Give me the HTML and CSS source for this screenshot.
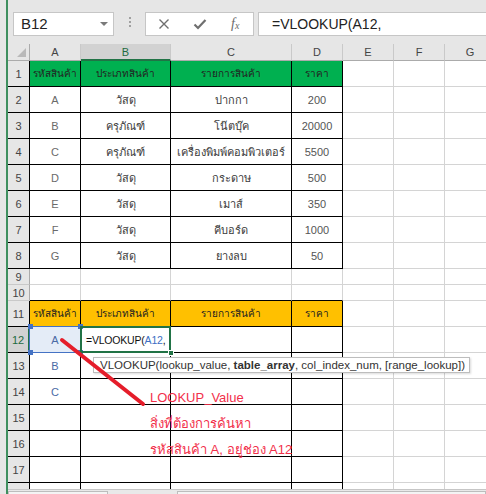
FILE: index.html
```html
<!DOCTYPE html>
<html lang="th">
<head>
    <meta charset="UTF-8">
    <meta name="viewport" content="width=device-width, initial-scale=1.0">
    <title>VLOOKUP</title>
    <link rel="stylesheet" href="styles.css">
</head>
<body>
<div class="app">
    <div class="edge"></div>
    <div class="workbook">
        <!-- name box + formula bar -->
        <div class="formula-bar">
            <div class="name-box">B12<span class="drop"></span></div>
            <div class="grip"><i></i><i></i><i></i></div>
            <div class="fx-buttons">
                <span class="fx-btn">
                    <svg width="12" height="12" viewBox="0 0 12 12"><path d="M1.5 1.5 L10.5 10.5 M10.5 1.5 L1.5 10.5" stroke="#6f6f6f" stroke-width="1.4" fill="none"/></svg>
                </span>
                <span class="fx-btn">
                    <svg width="14" height="12" viewBox="0 0 14 12"><path d="M1.5 6.5 L5 10 L12.5 2" stroke="#6f6f6f" stroke-width="2.2" fill="none"/></svg>
                </span>
                <span class="fx-btn fx">f<small>x</small></span>
            </div>
            <div class="formula-input">=VLOOKUP(A12,</div>
        </div>

        <div class="sheet">
            <div class="row head">
                <div class="corner"></div>
                <div class="ch">A</div><div class="ch sel">B</div><div class="ch">C</div><div class="ch">D</div>
                <div class="ch">E</div><div class="ch">F</div><div class="ch">G</div>
            </div>

            <!-- product table -->
            <div class="row">
                <div class="rh k">1</div>
                <div class="k g">รหัสสินค้า</div><div class="k g">ประเภทสินค้า</div><div class="k g">รายการสินค้า</div><div class="k g">ราคา</div>
                <div></div><div></div><div></div>
            </div>
            <div class="row">
                <div class="rh k">2</div>
                <div class="k lt">A</div><div class="k">วัสดุ</div><div class="k">ปากกา</div><div class="k num">200</div>
                <div></div><div></div><div></div>
            </div>
            <div class="row">
                <div class="rh k">3</div>
                <div class="k lt">B</div><div class="k">ครุภัณฑ์</div><div class="k">โน๊ตบุ๊ค</div><div class="k num">20000</div>
                <div></div><div></div><div></div>
            </div>
            <div class="row">
                <div class="rh k">4</div>
                <div class="k lt">C</div><div class="k">ครุภัณฑ์</div><div class="k">เครื่องพิมพ์คอมพิวเตอร์</div><div class="k num">5500</div>
                <div></div><div></div><div></div>
            </div>
            <div class="row">
                <div class="rh k">5</div>
                <div class="k lt">D</div><div class="k">วัสดุ</div><div class="k">กระดาษ</div><div class="k num">500</div>
                <div></div><div></div><div></div>
            </div>
            <div class="row">
                <div class="rh k">6</div>
                <div class="k lt">E</div><div class="k">วัสดุ</div><div class="k">เมาส์</div><div class="k num">350</div>
                <div></div><div></div><div></div>
            </div>
            <div class="row">
                <div class="rh k">7</div>
                <div class="k lt">F</div><div class="k">วัสดุ</div><div class="k">คีบอร์ด</div><div class="k num">1000</div>
                <div></div><div></div><div></div>
            </div>
            <div class="row">
                <div class="rh k">8</div>
                <div class="k lt">G</div><div class="k">วัสดุ</div><div class="k">ยางลบ</div><div class="k num">50</div>
                <div></div><div></div><div></div>
            </div>
            <div class="row short">
                <div class="rh">9</div>
                <div></div><div></div><div></div><div></div><div></div><div></div><div></div>
            </div>
            <div class="row short">
                <div class="rh">10</div>
                <div class="kb"></div><div class="kb"></div><div class="kb"></div><div class="kb"></div>
                <div></div><div></div><div></div>
            </div>

            <!-- lookup table -->
            <div class="row">
                <div class="rh k">11</div>
                <div class="k y">รหัสสินค้า</div><div class="k y">ประเภทสินค้า</div><div class="k y">รายการสินค้า</div><div class="k y">ราคา</div>
                <div></div><div></div><div></div>
            </div>
            <div class="row">
                <div class="rh k sel">12</div>
                <div class="k ref">A<i class="dot tl"></i><i class="dot tr"></i><i class="dot bl"></i><i class="dot br"></i></div>
                <div class="k active">=VLOOKUP(<span class="arg">A12</span>,<i class="fill-handle"></i></div>
                <div class="k"></div><div class="k"></div>
                <div></div><div></div><div></div>
            </div>
            <div class="row">
                <div class="rh k">13</div>
                <div class="k blue">B</div><div class="k"></div><div class="k"></div><div class="k"></div>
                <div></div><div></div><div></div>
            </div>
            <div class="row">
                <div class="rh k">14</div>
                <div class="k blue">C</div><div class="k"></div><div class="k"></div><div class="k"></div>
                <div></div><div></div><div></div>
            </div>
            <div class="row">
                <div class="rh k">15</div>
                <div class="k"></div><div class="k"></div><div class="k"></div><div class="k"></div>
                <div></div><div></div><div></div>
            </div>
            <div class="row">
                <div class="rh k">16</div>
                <div class="k"></div><div class="k"></div><div class="k"></div><div class="k"></div>
                <div></div><div></div><div></div>
            </div>
            <div class="row">
                <div class="rh k">17</div>
                <div class="k"></div><div class="k"></div><div class="k"></div><div class="k"></div>
                <div></div><div></div><div></div>
            </div>
            <!-- partly scrolled-in row, its number hidden under the tab strip -->
            <div class="row">
                <div class="rh k"></div>
                <div class="k"></div><div class="k"></div><div class="k"></div><div class="k"></div>
                <div></div><div></div><div></div>
            </div>

            <!-- function hint under the active cell -->
            <div class="hint">VLOOKUP(lookup_value, <b>table_array</b>, col_index_num, [range_lookup])</div>

            <svg class="pointer" width="160" height="380" viewBox="0 0 160 380">
                <line x1="54" y1="296" x2="135" y2="360" stroke="#e51d2a" stroke-width="4" stroke-linecap="round"/>
            </svg>
            <div class="note">
                <p>LOOKUP_Value</p>
                <p>สิ่งที่ต้องการค้นหา</p>
                <p>รหัสสินค้า A, อยู่ช่อง A12</p>
            </div>
        </div>

        <div class="sheet-tabs">
            <span class="tab-nav"></span>
            <span class="tab-strip"></span>
        </div>
    </div>
</div>
</body>
</html>
```

FILE: styles.css
```css
* {
    box-sizing: border-box;
    margin: 0;
    padding: 0;
}

html, body {
    width: 486px;
    height: 494px;
    overflow: hidden;
}

body {
    background-color: #e6e6e6;
    font-family: "Liberation Sans", "Noto Sans", sans-serif;
    color: #333;
}

.app {
    display: flex;
    height: 494px;
}

.edge {
    flex: none;
    width: 8px;
    background-color: #e6e6e6;
    border-right: 2px solid #3f8f5f;
}

.workbook {
    flex: 1;
    min-width: 0;
    display: flex;
    flex-direction: column;
}

/* formula bar */
.formula-bar {
    flex: none;
    height: 44px;
    display: flex;
    align-items: flex-start;
    padding: 12px 0 0 5px;
}

.name-box {
    position: relative;
    width: 101px;
    height: 24px;
    padding-left: 7px;
    background-color: white;
    border: 1px solid #c6c6c6;
    font-size: 15px;
    line-height: 22px;
    color: #222;
}

.drop {
    position: absolute;
    left: 86px;
    top: 9px;
    border-left: 4px solid transparent;
    border-right: 4px solid transparent;
    border-top: 4px solid #7a7a7a;
}

.grip {
    display: flex;
    flex-direction: column;
    gap: 2px;
    margin: 5px 0 0 15px;
}

.grip i {
    display: block;
    width: 2px;
    height: 2px;
    background-color: #a0a0a0;
}

.fx-buttons {
    display: flex;
    width: 109px;
    height: 24px;
    margin-left: 14px;
    background-color: white;
    border: 1px solid #c6c6c6;
}

.fx-btn {
    width: 36px;
    display: flex;
    align-items: center;
    justify-content: center;
}

.fx {
    font-family: "Liberation Serif", serif;
    font-style: italic;
    font-size: 14px;
    color: #6b6b6b;
}

.fx small {
    font-size: 10px;
    margin-top: 3px;
}

.formula-input {
    flex: 1;
    height: 24px;
    margin: 0 -2px 0 4px;
    padding-left: 13px;
    background-color: white;
    border: 1px solid #c6c6c6;
    font-size: 14px;
    line-height: 22px;
    color: #222;
}

/* grid */
.sheet {
    flex: 1;
    position: relative;
    overflow: hidden;
    background-color: white;
}

.row {
    display: grid;
    grid-template-columns: 22px 51px 90px 121px 51px 51px 51px 51px;
    height: 26px;
}

.row.head {
    height: 17px;
}

.row.short {
    height: 16px;
}

.row > div {
    display: flex;
    align-items: center;
    justify-content: center;
    white-space: nowrap;
    font-size: 11px;
    color: #3a3a3a;
    border-right: 1px solid #d4d4d4;
    border-bottom: 1px solid #d4d4d4;
}

.row > .corner {
    position: relative;
    background-color: #e6e6e6;
    border-right-color: #ababab;
    border-bottom-color: #ababab;
}

.corner::after {
    content: "";
    position: absolute;
    right: 3px;
    bottom: 3px;
    border-left: 9px solid transparent;
    border-bottom: 9px solid #b9b9b9;
}

.row > .ch {
    background-color: #e6e6e6;
    color: #444;
    border-right-color: #c9c9c9;
    border-bottom-color: #ababab;
}

.row > .rh {
    background-color: #e6e6e6;
    color: #444;
    border-right-color: #ababab;
    border-bottom-color: #c9c9c9;
}

.row > .ch.sel {
    background-color: #d2d2d2;
    color: #1e6b40;
    border-bottom: 2px solid #217346;
}

.row > .rh.sel {
    background-color: #d2d2d2;
    color: #1e6b40;
    border-right: 2px solid #217346;
}

.row > .k {
    border-right-color: #000;
    border-bottom-color: #000;
}

.row > .kb {
    border-bottom-color: #000;
}

.row > .g {
    background-color: #00b050;
    color: #222;
    font-size: 10px;
}

.row > .y {
    background-color: #ffc000;
    color: #222;
    font-size: 10px;
}

.row > .lt {
    color: #6a6a6a;
}

.row > .num {
    color: #555;
}

.row > .blue {
    color: #4a6aa5;
}

/* range reference highlight on A12 */
.row > .ref {
    position: relative;
    background-color: #e4ecf7;
    color: #4a6aa5;
}

.ref::before {
    content: "";
    position: absolute;
    left: -1px;
    top: -1px;
    right: -1px;
    bottom: -1px;
    border: 1px solid #4472c4;
}

.dot {
    position: absolute;
    width: 5px;
    height: 5px;
    background-color: #4472c4;
}

.dot.tl { left: -2px; top: -3px; }
.dot.tr { right: -3px; top: -3px; }
.dot.bl { left: -2px; bottom: -3px; }
.dot.br { right: -3px; bottom: -3px; }

/* active cell B12 */
.row > .active {
    position: relative;
    justify-content: flex-start;
    padding-left: 5px;
    font-size: 10.5px;
    letter-spacing: -0.2px;
    color: #111;
    z-index: 1;
}

.active::after {
    content: "";
    position: absolute;
    left: -1px;
    top: -1px;
    right: -1px;
    bottom: -1px;
    border: 2px solid #217346;
}

.arg {
    color: #3c6fc4;
}

.fill-handle {
    position: absolute;
    right: -4px;
    bottom: -4px;
    width: 6px;
    height: 6px;
    background-color: #217346;
    border: 1px solid white;
    z-index: 2;
}

.hint {
    position: absolute;
    left: 85px;
    top: 313px;
    height: 16px;
    padding: 0 4px 0 6px;
    background-color: white;
    border: 1px solid #bdbdbd;
    box-shadow: 1px 1px 2px rgba(0,0,0,0.15);
    font-size: 11.5px;
    line-height: 14px;
    color: #333;
    white-space: nowrap;
    z-index: 3;
}

.pointer {
    position: absolute;
    left: 0;
    top: 0;
    z-index: 4;
}

.note {
    position: absolute;
    left: 142px;
    top: 341px;
    font-size: 13px;
    line-height: 26px;
    color: #f2304b;
    white-space: nowrap;
    z-index: 4;
}

/* sheet tab strip */
.sheet-tabs {
    flex: none;
    display: flex;
    height: 5px;
    background-color: #e9e9e9;
    border-top: 1px solid #c6c6c6;
}

.tab-nav {
    width: 100px;
    margin-top: 1px;
    background-color: #f4f4f4;
    border: 1px solid #bdbdbd;
    border-bottom: none;
}

.tab-strip {
    flex: 1;
    margin: 1px 0 0 69px;
    background-color: #f4f4f4;
    border: 1px solid #bdbdbd;
    border-bottom: none;
}
```
